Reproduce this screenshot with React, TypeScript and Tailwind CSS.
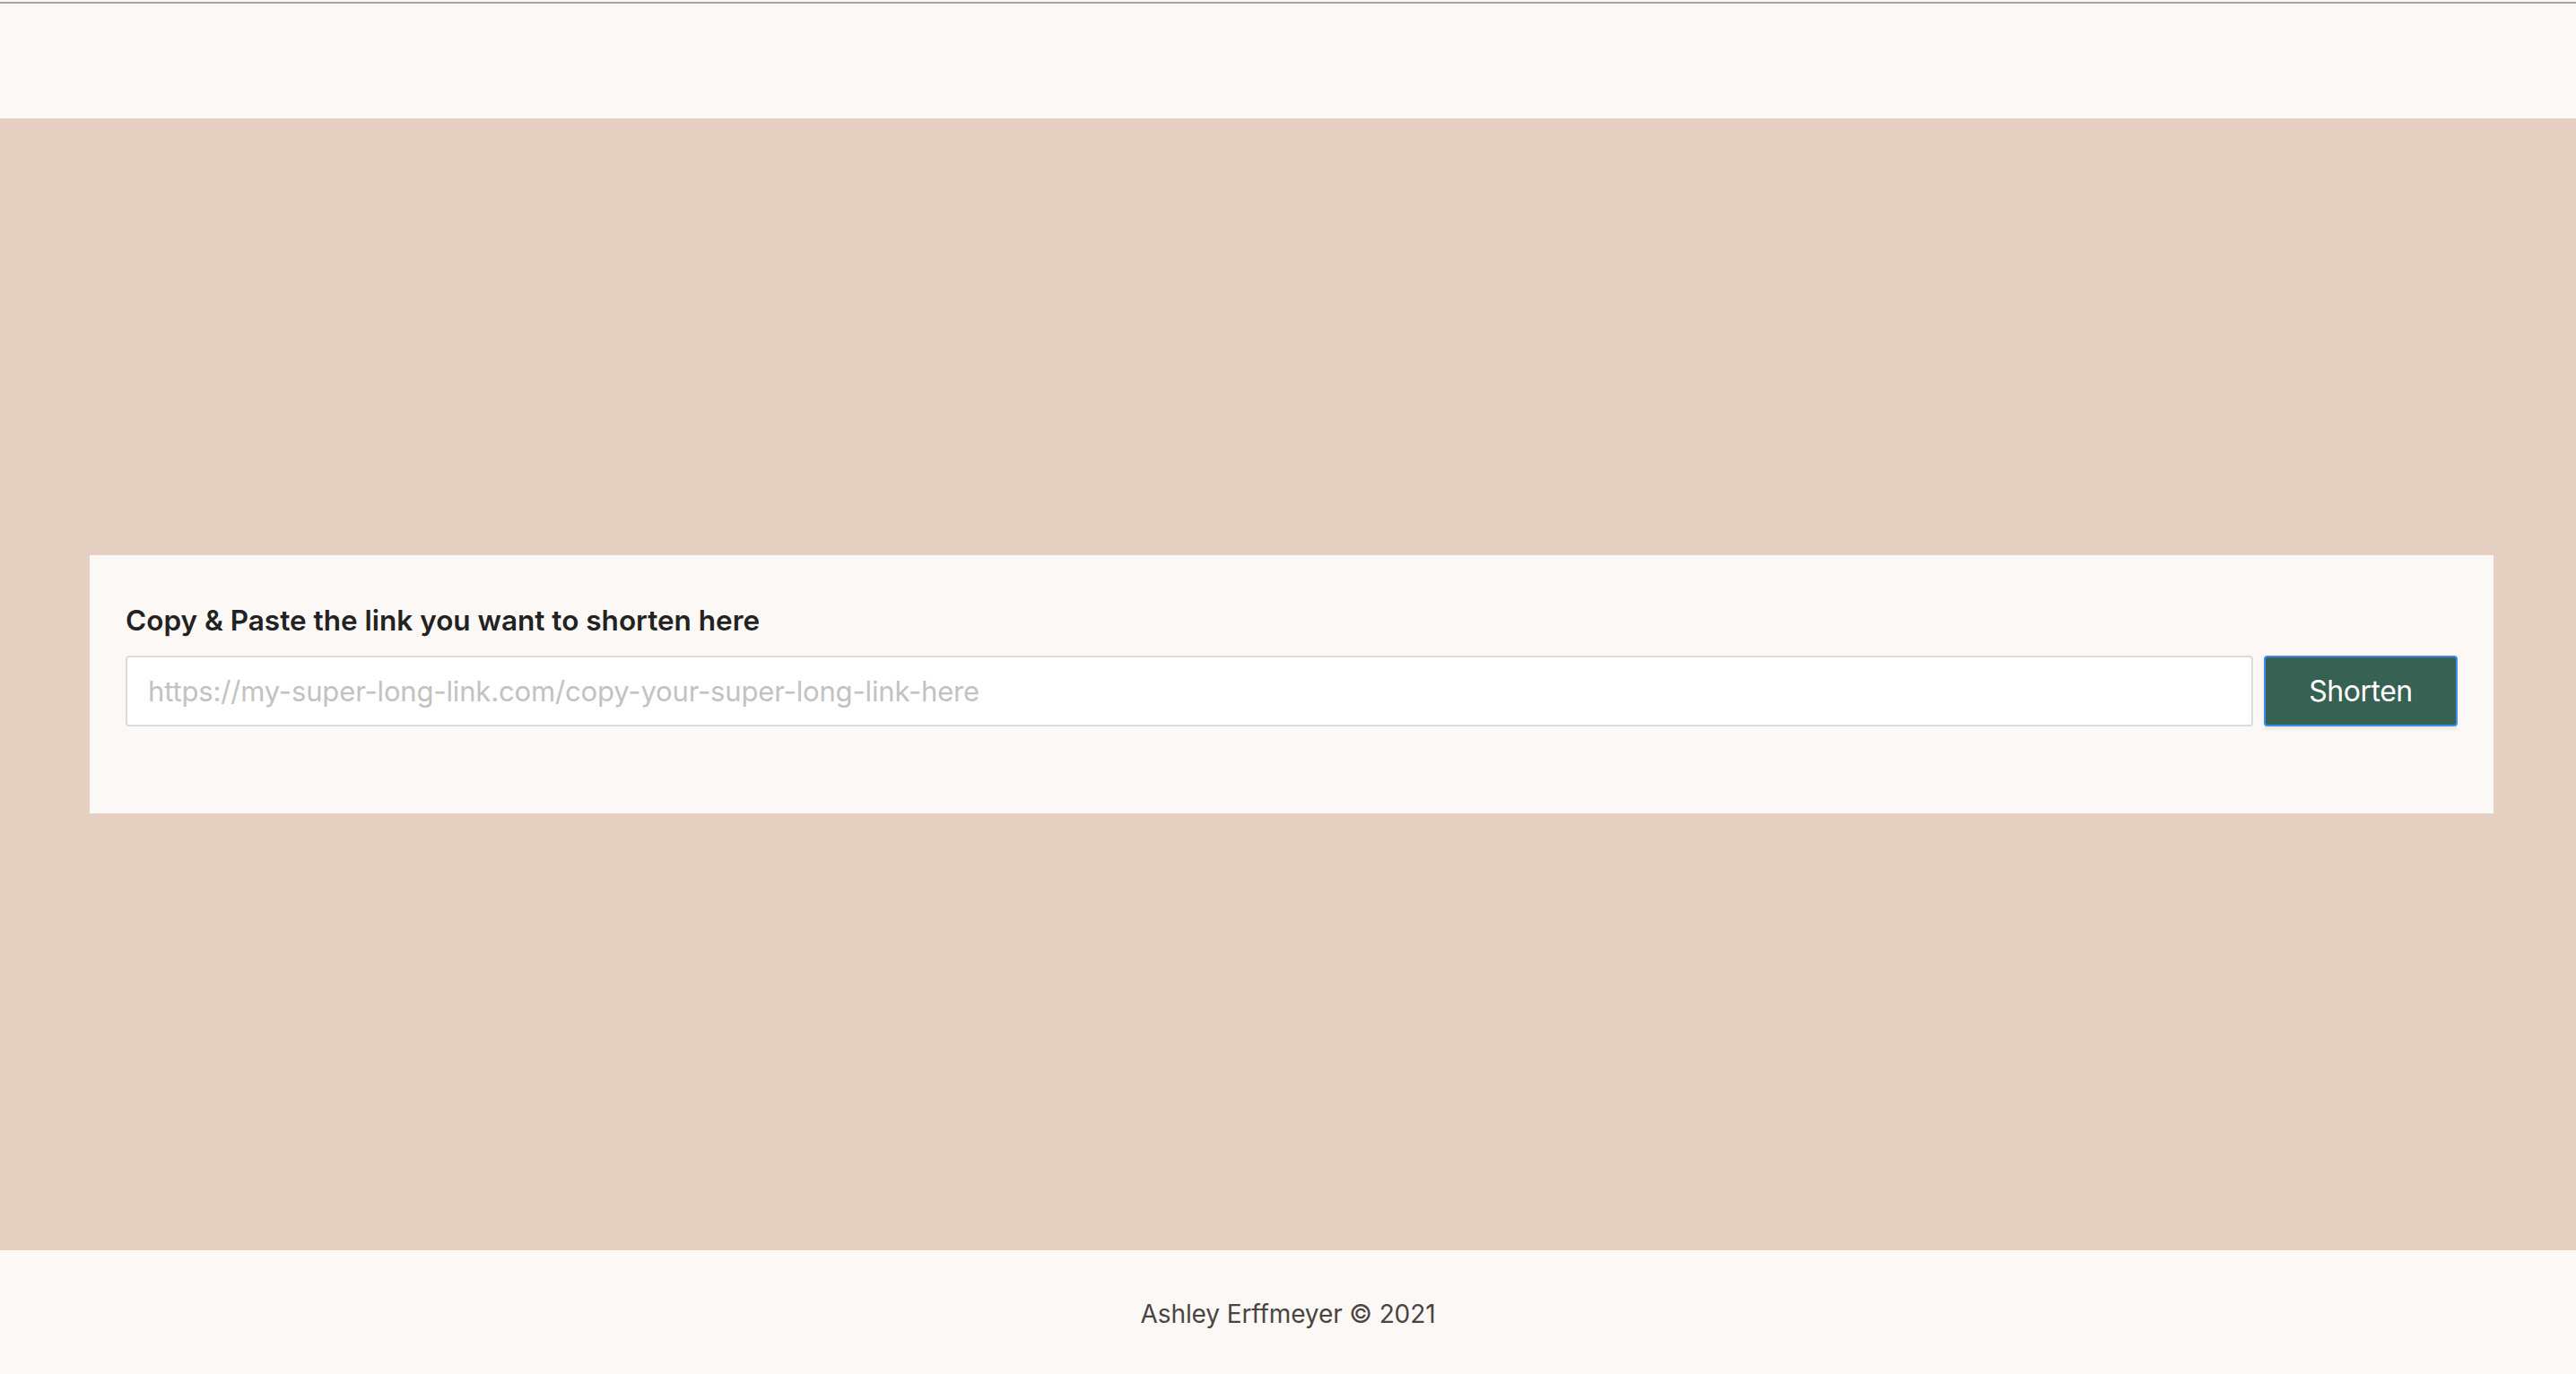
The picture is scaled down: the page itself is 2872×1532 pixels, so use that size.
import React from "react";

export default function App() {
  return (
    <div
      className="flex h-[1532px] w-[2872px] flex-col overflow-hidden bg-[#fcf8f5]"
      style={{ fontFamily: "Inter, 'Noto Sans', 'Liberation Sans', sans-serif" }}
    >
      <header className="h-[132px] shrink-0 bg-[#fcf8f5]">
        <div className="h-[2px] bg-[#fcf8f5]" />
        <div className="h-[2px] bg-[#a3a3a3]" />
      </header>
      <main className="flex h-[1262px] shrink-0 items-center bg-[#e5cfc1]">
        <div className="ml-[100px] mr-[92px] flex-1 bg-[#fcf8f5] px-[40px] pb-[97px] pt-[53px]">
          <h1 className="mb-[19px] text-[31.5px] font-semibold leading-[40px] text-[#222222]">
            Copy &amp; Paste the link you want to shorten here
          </h1>
          <div className="flex gap-[12px]">
            <input
              type="text"
              placeholder="https://my-super-long-link.com/copy-your-super-long-link-here"
              className="h-[79px] flex-1 rounded-[4px] border-2 border-[#dcdcdc] bg-white px-[23px] text-[31px] tracking-[-0.15px] text-[#222] outline-none placeholder:text-[#c2c2c2]"
            />
            <button className="h-[79px] w-[216px] rounded-[4px] border-2 border-[#3d8ded] bg-[#376152] text-[32px] tracking-[-0.5px] text-white shadow-[0_4px_3px_rgba(0,0,0,0.06)]">
              Shorten
            </button>
          </div>
        </div>
      </main>
      <footer className="flex flex-1 items-center justify-center bg-[#fcf8f5] pt-[4px]">
        <p className="text-[28px] tracking-[-0.1px] text-[#4a4542]">Ashley Erffmeyer © 2021</p>
      </footer>
    </div>
  );
}
